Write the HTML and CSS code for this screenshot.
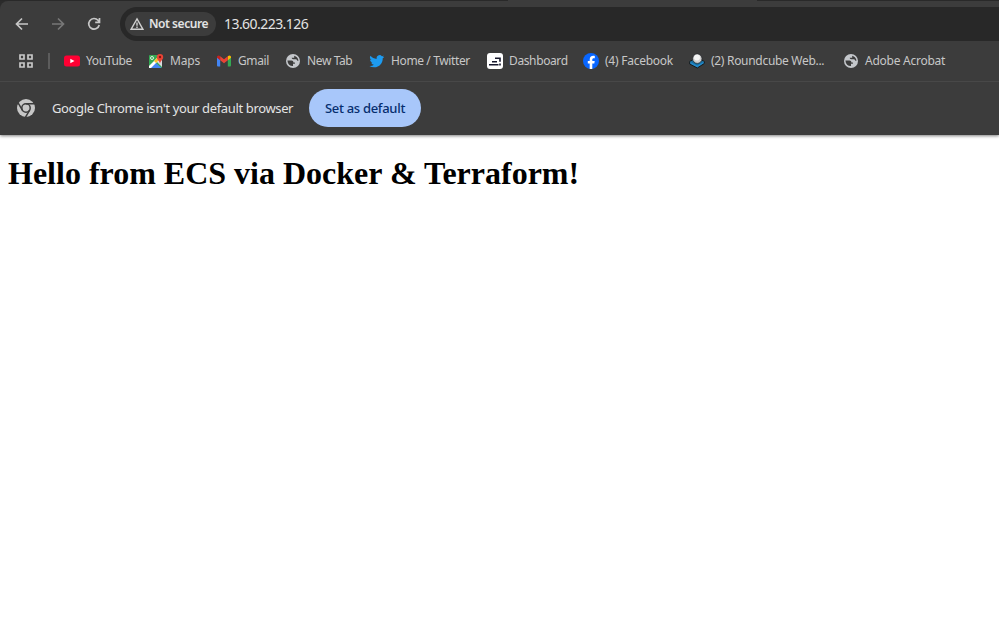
FILE: index.html
```html
<!DOCTYPE html>
<html lang="en">
<head>
<meta charset="utf-8">
<title>13.60.223.126</title>
<link rel="stylesheet" href="styles.css">
</head>
<body>
<header class="browser">
  <div class="frame"><span class="active-tab"></span></div>
  <div class="chrome">
    <nav class="toolbar">
      <svg class="nav" viewBox="0 0 16 16"><path d="M14 8H3M8 2.500 2.500 8 8 13.500"/></svg>
      <svg class="nav disabled" viewBox="0 0 16 16"><path d="M2 8h11M8 2.500 13.500 8 8 13.500"/></svg>
      <svg class="nav" viewBox="0 0 16 16"><path d="M13.200 9A5.300 5.300 0 1 1 12 4.300L13.500 6M13.500 2v4.300H9.200"/></svg>
      <div class="address">
        <div class="security">
          <svg class="warning" viewBox="0 0 14 14"><path d="M7 1.800 13 12.300H1Z"/><path d="M7 5.500v3.200M7 9.600v1.300"/></svg>
          <span>Not secure</span>
        </div>
        <span class="url">13.60.223.126</span>
      </div>
    </nav>
    <nav class="bookmarks">
      <svg class="apps" viewBox="0 0 14 14"><path d="M1 1h4v4H1zM9 1h4v4H9zM1 9h4v4H1zM9 9h4v4H9z"/></svg>
      <span class="divider"></span>
      <a class="bookmark youtube"><svg viewBox="0 0 16 16"><rect y="2.500" width="16" height="11" rx="2.500" fill="#ff0033"/><path d="m6.300 5.800 4.200 2.200-4.200 2.200z" fill="#fff"/></svg><span>YouTube</span></a>
      <a class="bookmark maps"><svg viewBox="0 0 16 16"><rect x="1" y="2" width="13" height="13" rx="1" fill="#34a853"/><path d="m8.500 8.500 5.500-4V14z" fill="#dadce0"/><path d="m7.500 9.500 6 5.500H2z" fill="#4285f4"/><path d="m1 13 9-9 2 2-9 9H1z" fill="#fff"/><path d="m6 8 4-4 2 2-4 4z" fill="#fbc02d"/><circle cx="4" cy="5" r="1.500" fill="none" stroke="#fff" stroke-width=".8"/><path d="M12 11c0-3-3.200-4-3.200-6.800a3.200 3.200 0 0 1 6.400 0C15.200 7 12 8 12 11" fill="#ea4335"/><circle cx="12" cy="4" r="1.200" fill="#811411"/></svg><span>Maps</span></a>
      <a class="bookmark gmail"><svg viewBox="0 0 16 16"><path d="M1 4v8.500q0 1 1 1h2.200V6.500z" fill="#4285f4"/><path d="M15 4v8.500q0 1-1 1h-2.200V6.500z" fill="#34a853"/><path d="M1 4.800V4q0-1.500 1.500-1.500.7 0 1.700.8v4z" fill="#c5221f"/><path d="M15 4.800V4q0-1.500-1.500-1.500-.7 0-1.700.8v4z" fill="#fbbc04"/><path d="M4.200 3.300 8 6.200l3.800-2.900v4L8 10.200 4.200 7.300z" fill="#ea4335"/></svg><span>Gmail</span></a>
      <a class="bookmark newtab"><svg viewBox="0 0 16 16"><circle cx="8" cy="8" r="7" fill="#c4c7cb"/><path d="M2.400 7.400h4c1.500 0 2 .7 2 2h1.500v1.400H8v2.300c-3 .1-5.300-1.800-5.600-5.700M9.200 2.700c2.300.6 4 2.400 4.300 5h-1.300c0-1-.7-1.500-1.800-1.500H8.200c-1 0-1.500-.6-1.500-1.400h2.500z" fill="#3c3c3c"/></svg><span>New Tab</span></a>
      <a class="bookmark twitter"><svg viewBox="-1 0 26 24"><path fill="#1d9bf0" d="M23.600 4.900c-.9.400-1.800.6-2.800.8 1-.6 1.800-1.600 2.200-2.700-1 .6-2 1-3.100 1.200a4.900 4.900 0 0 0-8.400 4.500C7.400 8.500 3.800 6.500 1.400 3.600a4.900 4.900 0 0 0 1.500 6.600c-.8 0-1.600-.2-2.200-.6v.1c0 2.400 1.700 4.400 3.900 4.800-.7.200-1.500.2-2.200.1.600 2 2.400 3.400 4.600 3.400A9.900 9.900 0 0 1-.3 20a14 14 0 0 0 7.600 2.200c9.100 0 14-7.500 14-14v-.6c1-.7 1.800-1.600 2.300-2.700"/></svg><span>Home / Twitter</span></a>
      <a class="bookmark dashboard"><svg viewBox="0 0 16 16"><rect width="16" height="16" rx="3" fill="#fff"/><path d="M2 11.700h9.500M5 8.700h5M8 5.200h5v3.500M13 10.500v2" fill="none" stroke="#16172c" stroke-width="1.600"/></svg><span>Dashboard</span></a>
      <a class="bookmark facebook"><svg viewBox="0 0 16 16"><circle cx="8" cy="8" r="8" fill="#0866ff"/><path fill="#fff" d="M6.700 15.900v-5.400H4.800V8h1.900V6.800c0-2.700 1.200-4 3.700-4 .5 0 1.100.1 1.400.2v2.200h-1c-1.100 0-1.500.5-1.500 1.500V8h2.400l-.4 2.500h-2v5.400z"/></svg><span>(4) Facebook</span></a>
      <a class="bookmark roundcube"><svg viewBox="0 0 16 16"><path d="m.7 8.500 7.300-4 7.300 4v2L8.300 15 .7 11z" fill="#2389ca" stroke="#17191a"/><path d="m1.200 8.700 6.900 3.800 6.700-3.800L8 5z" fill="#176b9c"/><circle cx="8.300" cy="5.700" r="4.700" fill="#d0d0d0" stroke="#202326" stroke-width=".7"/><circle cx="8" cy="4.500" r="3" fill="#f5f5f5"/></svg><span>(2) Roundcube Web...</span></a>
      <a class="bookmark acrobat"><svg viewBox="0 0 16 16"><circle cx="8" cy="8" r="7" fill="#c4c7cb"/><path d="M2.400 7.400h4c1.500 0 2 .7 2 2h1.500v1.400H8v2.300c-3 .1-5.300-1.800-5.600-5.700M9.200 2.700c2.300.6 4 2.400 4.300 5h-1.300c0-1-.7-1.500-1.800-1.500H8.200c-1 0-1.500-.6-1.500-1.400h2.500z" fill="#3c3c3c"/></svg><span>Adobe Acrobat</span></a>
    </nav>
    <div class="infobar">
      <svg class="chrome-icon" viewBox="0 0 18 18"><circle cx="9" cy="9" r="9" fill="#c7c7c7"/><circle cx="9" cy="9" r="4.200" fill="none" stroke="#3c3c3c" stroke-width="1.500"/><path d="M9 4.800h8.500M5.360 11.100 1.100 3.800M12.640 11.100 8.400 18.400" stroke="#3c3c3c" stroke-width="1.500"/></svg>
      <span class="message">Google Chrome isn't your default browser</span>
      <button class="set-default">Set as default</button>
    </div>
  </div>
</header>
<main><h1>Hello from ECS via Docker &amp; Terraform!</h1></main>
</body>
</html>
```
FILE: styles.css
```css
* { box-sizing: border-box; }
body { margin: 0; background: #fff; height: 624px; overflow: hidden; }
.browser {
  height: 135px;
  background: #2b2b2b;
  font-family: "Noto Sans", sans-serif;
  color: #e3e3e3;
  white-space: nowrap;
  box-shadow: 0 1px 3px rgba(0, 0, 0, .5);
}
.frame { height: 1px; background: #292929; display: flex; }
.active-tab { margin-left: 508px; width: 249px; background: #3c3c3c; }
.chrome { height: 134px; background: #3c3c3c; border-radius: 8px 0 0 0; }
.toolbar { height: 40px; padding: 6px 0 0 14px; display: flex; align-items: center; }
.nav { width: 16px; height: 16px; margin-right: 20px; fill: none; stroke: #c7c7c7; stroke-width: 1.7; flex: none; }
.nav.disabled { stroke: #777; }
.address { flex: 1; height: 34px; margin-left: -2px; padding-left: 5px; background: #282828; border-radius: 17px 0 0 17px; display: flex; align-items: center; }
.security { width: 91px; height: 24px; padding-left: 5px; background: #3c3c3c; border-radius: 12px; display: flex; align-items: center; gap: 5px; font-size: 12px; font-weight: 600; letter-spacing: -.45px; }
.security span { padding-bottom: 1px; }
.warning { width: 14px; height: 14px; fill: none; stroke: #d0d0d0; stroke-width: 1.4; flex: none; }
.url { margin-left: 8px; padding-bottom: 1px; font-size: 14px; letter-spacing: -.55px; }
.bookmarks { height: 40px; padding-left: 19px; display: flex; align-items: center; color: #c7c7c7; font-size: 12px; letter-spacing: -.38px; }
.apps { width: 14px; height: 14px; flex: none; fill: none; stroke: #c7c7c7; stroke-width: 1.7; }
.divider { width: 2px; height: 16px; margin: 0 14px 0 15px; background: #5c5c5c; flex: none; }
.bookmark { display: flex; align-items: center; gap: 6px; flex: none; }
.bookmark svg { width: 16px; height: 16px; flex: none; }
.bookmark span { padding-bottom: 2px; }
.youtube { width: 84px; }
.maps { width: 68px; letter-spacing: -.2px; }
.gmail { width: 69px; }
.newtab { width: 84px; }
.twitter { width: 118px; }
.dashboard { width: 96px; }
.facebook { width: 106px; letter-spacing: -.25px; }
.roundcube { width: 154px; letter-spacing: -.3px; }
.acrobat { width: 104px; letter-spacing: -.25px; }
.infobar { height: 54px; padding: 0 0 2px 17px; border-top: 1px solid #484848; display: flex; align-items: center; }
.chrome-icon { width: 18px; height: 18px; flex: none; }
.message { width: 257px; margin-left: 17px; font-size: 13px; letter-spacing: -.36px; }
.set-default { width: 112px; height: 38px; padding: 0; border: 0; border-radius: 19px; background: #a8c7fa; color: #062e6f; font: 500 13px "Noto Sans", sans-serif; letter-spacing: -.3px; }
main { padding: 0 8px; }
h1 { margin: 20px 0 0; font: bold 32px/37px "Liberation Serif", serif; color: #000; }
```
